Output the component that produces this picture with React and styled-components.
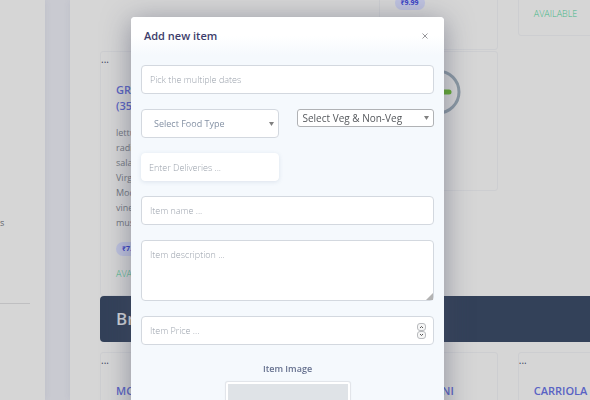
import React from "react";
import styled, { createGlobalStyle, css } from "styled-components";

const GlobalStyle = createGlobalStyle`
  *, *::before, *::after { box-sizing: border-box; }
  body {
    margin: 0;
    overflow: hidden;
    background: #c9cad1;
    font-family: "Open Sans", "Noto Sans", sans-serif;
    font-size: 9px;
  }
  h1, h2, h3, p { margin: 0; }
  button, input, select, textarea { font: inherit; }
`;

/* Page behind the dialog */

const Page = styled.div`
  display: flex;
  gap: 25px;
  height: 100vh;
  overflow: hidden;
`;

const Sidebar = styled.aside`
  flex: 0 0 45px;
  padding-top: 215px;
  background: #d6d6d6;
  box-shadow: 0 0 6px rgba(110, 115, 150, 0.12);
  color: #62646c;
  line-height: 16px;
`;

const Divider = styled.hr`
  width: 30px;
  margin: 72px 0 0;
  border: 0;
  border-top: 1px solid #bfbfc1;
`;

const Main = styled.main`
  flex: 1 0 567px;
  padding-left: 30px;
  background: #d6d6d6;
  box-shadow: 0 0 6px rgba(110, 115, 150, 0.12);
`;

const CardGrid = styled.div`
  display: grid;
  grid-template-columns: repeat(4, 1fr);
  align-items: start;
  gap: 20px;
  margin-top: ${(p) => p.$offset}px;
`;

const Card = styled.article`
  grid-column: ${(p) => p.$column};
  border: 1px solid #cdced1;
  border-radius: 3px;
  overflow: hidden;
`;

const CardAlt = styled.p`
  color: #3c425c;
  font-size: 10px;
  line-height: 15px;
`;

const CardBody = styled.div`
  padding: ${(p) => p.$top}px 15px 14px;
`;

const CardTitle = styled.h2`
  color: #5963c4;
  font-size: 11px;
  font-weight: 600;
  line-height: 16px;
  white-space: nowrap;
`;

const Ingredients = styled.p`
  margin: 11px 0 12px;
  color: #72767f;
  line-height: 15px;
  white-space: pre-line;
`;

const Price = styled.span`
  display: block;
  width: max-content;
  margin-bottom: 10px;
  padding: 2px 6px;
  border-radius: 7px;
  background: #bec2df;
  color: #3640c4;
  font-size: 7px;
  font-weight: 700;
  line-height: 10px;
`;

const Status = styled.p`
  color: #45b688;
  font-weight: 300;
  line-height: 15px;
`;

const StatusRing = styled.svg`
  display: block;
  margin: 17px auto 75px;
`;

const Banner = styled.h1`
  padding: 0 16px;
  border-radius: 4px;
  background: #334159;
  color: #d0d3d8;
  font-size: 17px;
  font-weight: 600;
  line-height: 46px;
`;

/* Dialog */

const Overlay = styled.div`
  position: fixed;
  inset: 0;
  display: flex;
  justify-content: center;
  align-items: flex-start;
  padding: 17px 15px 0 0;
  overflow: hidden;
`;

const Dialog = styled.section`
  width: 313px;
  max-width: 100%;
  border-radius: 4px;
  background: #f5f9fd;
  box-shadow: 0 4px 28px rgba(65, 70, 95, 0.5);
`;

const DialogHeader = styled.header`
  display: flex;
  align-items: center;
  justify-content: space-between;
  height: 38px;
  padding: 0 13px;
  border-radius: 4px 4px 0 0;
  background: linear-gradient(#fff 50%, #f5f9fd);
`;

const DialogTitle = styled.h2`
  color: #3d3d6b;
  font-size: 11px;
  font-weight: 600;
  line-height: 16px;
`;

const CloseButton = styled.button`
  display: grid;
  place-items: center;
  width: 12px;
  height: 12px;
  padding: 0;
  border: 0;
  background: none;
`;

const Form = styled.form`
  display: grid;
  gap: 15px;
  padding: 10px 10px 24px;
`;

const FieldRow = styled.div`
  display: grid;
  grid-template-columns: 1fr 1fr;
  align-items: start;
  gap: 18px;
`;

const fieldBox = css`
  display: block;
  width: 100%;
  height: 29px;
  margin: 0;
  padding: 0 8px;
  border: 1px solid #d3d8df;
  border-radius: 4px;
  outline: 0;
  background: #fff;
  color: #76808f;
  font-size: 9px;

  &::placeholder {
    color: #9ba2ac;
    font-weight: 300;
    opacity: 1;
  }
`;

const TextInput = styled.input`
  ${fieldBox}
  ${(p) =>
    p.$raised &&
    css`
      height: 28px;
      padding: 0 7px;
      border-color: #fff;
      box-shadow: 0 1px 4px rgba(90, 110, 150, 0.16);
    `}
  appearance: textfield;

  &::-webkit-inner-spin-button {
    appearance: none;
    margin: 0;
  }
`;

const TextArea = styled.textarea`
  ${fieldBox}
  height: 61px;
  padding: 7px 8px;
  line-height: 13px;
  resize: none;
`;

const Stack = styled.div`
  display: grid;

  > * {
    grid-area: 1 / 1;
  }
`;

const Select = styled.select`
  ${fieldBox}
  appearance: none;
  padding: 0 12px;
  color: #8491a4;
  ${(p) =>
    p.$compact &&
    css`
      height: 18px;
      padding: 0 5px;
      border-color: #b0b2b5;
      border-radius: 3px;
      color: #55585c;
      font-size: 10px;
    `}
`;

const Caret = styled.svg`
  place-self: center end;
  margin-right: 5px;
  pointer-events: none;
`;

const Grip = styled.svg`
  place-self: end;
  margin: 0 1px 1px 0;
  pointer-events: none;
`;

const Stepper = styled.div`
  place-self: center end;
  display: grid;
  margin-right: 8px;
`;

const StepButton = styled.button`
  display: grid;
  place-items: center;
  width: 9px;
  height: 8px;
  padding: 0;
  border: 1px solid #b9bbbe;
  border-radius: 3px;
  background: #f6f6f6;
`;

const ImageField = styled.div`
  display: grid;
  justify-items: center;
  gap: 3px;
`;

const ImageLabel = styled.h3`
  color: #66718f;
  font-size: 9px;
  font-weight: 600;
  line-height: 18px;
`;

const ImageFrame = styled.div`
  width: 126px;
  padding: 2px;
  border: 1px solid #e2e5ea;
  border-radius: 3px;
  background: #fff;
  box-shadow: 0 0 1px #dfe3e8;
`;

const ImagePreview = styled.div`
  height: 80px;
  background: #dfe3e7;
`;

function Dropdown({ label, compact }) {
  return (
    <Stack>
      <Select aria-label={label} $compact={compact} defaultValue="">
        <option value="">{label}</option>
      </Select>
      <Caret width="5" height="4" viewBox="0 0 5 4" aria-hidden="true">
        <path d="M0 0H5L2.5 4Z" fill="#808080" />
      </Caret>
    </Stack>
  );
}

function Step({ label, path }) {
  return (
    <StepButton type="button" aria-label={label}>
      <svg width="5" height="4" viewBox="0 0 5 4" fill="none" stroke="#555" aria-hidden="true">
        <path d={path} />
      </svg>
    </StepButton>
  );
}

function Menu() {
  return (
    <Page>
      <Sidebar>
        s
        <Divider />
      </Sidebar>
      <Main>
        <CardGrid $offset={-20}>
          <Card $column={3}>
            <CardBody $top={15}>
              <Price>₹9.99</Price>
              <Status>AVAILABLE</Status>
            </CardBody>
          </Card>
          <Card $column={4}>
            <CardBody $top={25}>
              <Status>AVAILABLE</Status>
            </CardBody>
          </Card>
        </CardGrid>
        <CardGrid $offset={1}>
          <Card $column={1}>
            <CardAlt>...</CardAlt>
            <CardBody $top={15}>
              <CardTitle>GREEK</CardTitle>
              <CardTitle>(350g)</CardTitle>
              <Ingredients>
                {"lettuce\nradish\nsalad\nVirgin\nModena\nvinegar\nmustard"}
              </Ingredients>
              <Price>₹7.99</Price>
              <Status>AVAILABLE</Status>
            </CardBody>
          </Card>
          <Card $column={3}>
            <StatusRing width="46" height="46" viewBox="0 0 46 46" aria-hidden="true">
              <circle cx="23" cy="23" r="21" fill="none" stroke="#8b99a4" strokeWidth="3" />
              <path d="M12 23H34" stroke="#62ab2e" strokeWidth="5" strokeLinecap="round" />
            </StatusRing>
          </Card>
        </CardGrid>
        <Banner>Breakfast</Banner>
        <CardGrid $offset={10}>
          <Card $column={1}>
            <CardAlt>...</CardAlt>
            <CardBody $top={15}>
              <CardTitle>MC</CardTitle>
            </CardBody>
          </Card>
          <Card $column={3}>
            <CardAlt>...</CardAlt>
            <CardBody $top={15}>
              <CardTitle>MACARONI</CardTitle>
            </CardBody>
          </Card>
          <Card $column={4}>
            <CardAlt>...</CardAlt>
            <CardBody $top={15}>
              <CardTitle>CARRIOLA PANINI</CardTitle>
            </CardBody>
          </Card>
        </CardGrid>
      </Main>
    </Page>
  );
}

export default function App() {
  return (
    <>
      <GlobalStyle />
      <Menu />
      <Overlay>
        <Dialog role="dialog" aria-labelledby="dialog-title">
          <DialogHeader>
            <DialogTitle id="dialog-title">Add new item</DialogTitle>
            <CloseButton type="button" aria-label="Close">
              <svg width="6" height="6" viewBox="0 0 6 6" stroke="#98989c" aria-hidden="true">
                <path d="M0.5 0.5L5.5 5.5M5.5 0.5L0.5 5.5" />
              </svg>
            </CloseButton>
          </DialogHeader>
          <Form>
            <TextInput aria-label="Dates" placeholder="Pick the multiple dates" />
            <FieldRow>
              <Dropdown label="Select Food Type" />
              <Dropdown label="Select Veg & Non-Veg" compact />
            </FieldRow>
            <FieldRow>
              <TextInput $raised aria-label="Deliveries" placeholder="Enter Deliveries ..." />
            </FieldRow>
            <TextInput aria-label="Item name" placeholder="Item name ..." />
            <Stack>
              <TextArea aria-label="Item description" placeholder="Item description ..." />
              <Grip width="7" height="7" viewBox="0 0 7 7" aria-hidden="true">
                <path d="M7 0V7H0Z" fill="#b3b3b3" />
              </Grip>
            </Stack>
            <Stack>
              <TextInput type="number" aria-label="Item price" placeholder="Item Price ..." />
              <Stepper>
                <Step label="Increase price" path="M1 3L2.5 1.5L4 3" />
                <Step label="Decrease price" path="M1 1L2.5 2.5L4 1" />
              </Stepper>
            </Stack>
            <ImageField>
              <ImageLabel>Item Image</ImageLabel>
              <ImageFrame>
                <ImagePreview role="img" aria-label="Item image preview" />
              </ImageFrame>
            </ImageField>
          </Form>
        </Dialog>
      </Overlay>
    </>
  );
}
